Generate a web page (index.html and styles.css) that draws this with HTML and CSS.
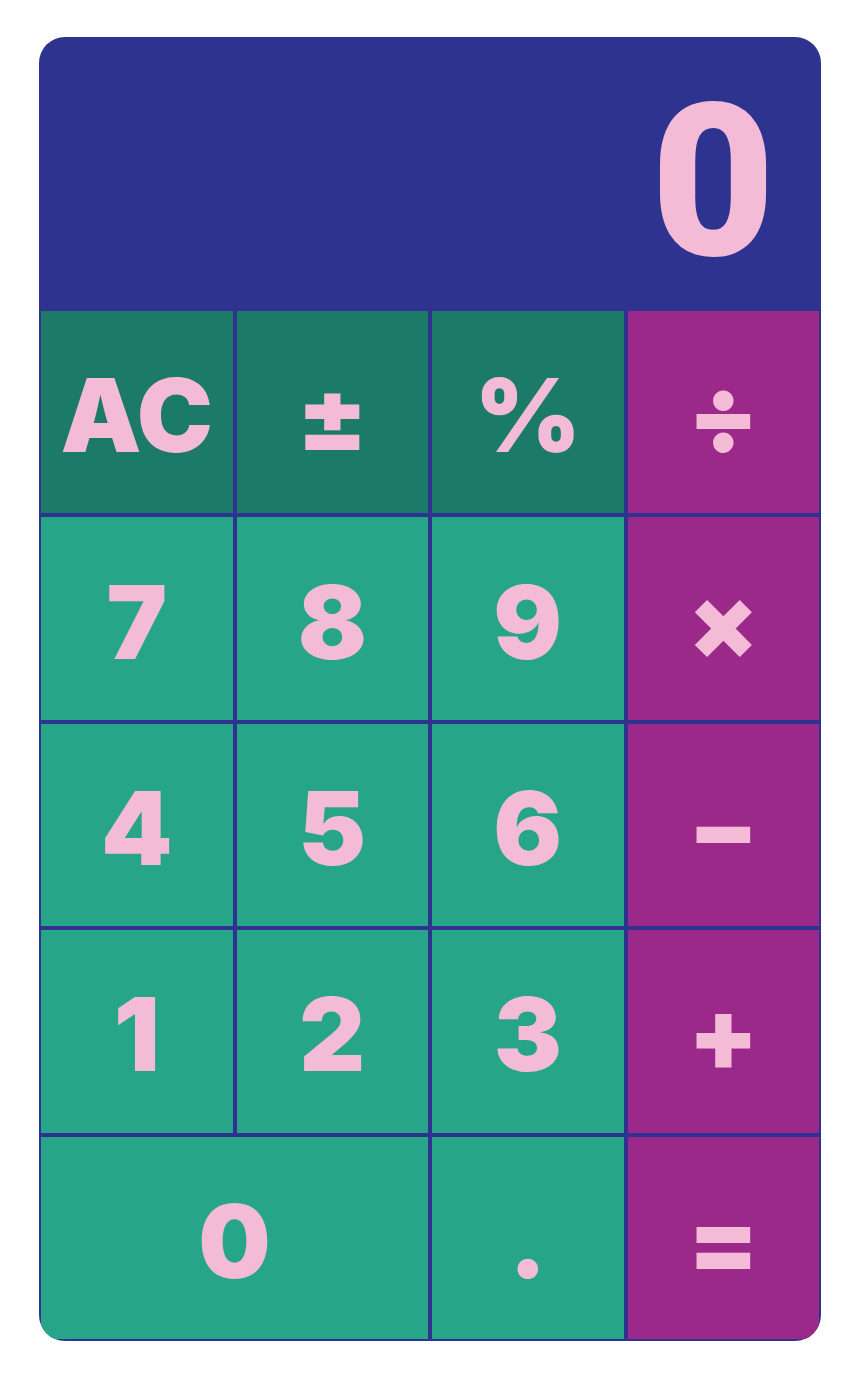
FILE: index.html
```html
<!DOCTYPE html>
<html lang="en">
<head>
<meta charset="utf-8">
<title>Calculator</title>
<link rel="stylesheet" href="styles.css">
</head>
<body>
<div class="calc">
  <div class="display"><span class="value">0</span></div>
  <div class="keys">
    <button class="key fn">AC</button>
    <button class="key fn">±</button>
    <button class="key fn">%</button>
    <button class="key op">÷</button>
    <button class="key num">7</button>
    <button class="key num">8</button>
    <button class="key num">9</button>
    <button class="key op">×</button>
    <button class="key num">4</button>
    <button class="key num">5</button>
    <button class="key num">6</button>
    <button class="key op">−</button>
    <button class="key num">1</button>
    <button class="key num">2</button>
    <button class="key num">3</button>
    <button class="key op">+</button>
    <button class="key num zero">0</button>
    <button class="key num">.</button>
    <button class="key op">=</button>
  </div>
</div>
</body>
</html>
```
FILE: styles.css
```css
html, body {
  margin: 0;
  padding: 0;
  background: #ffffff;
}
body {
  font-family: Inter, "Noto Sans", sans-serif;
}
.calc {
  box-sizing: border-box;
  width: 782px;
  margin: 37px 0 0 39px;
  background: #2e3390;
  border-radius: 26px;
  overflow: hidden;
  padding: 0 2px 2px 2px;
  display: flex;
  flex-direction: column;
  gap: 4px;
}
.display {
  height: 270px;
  box-sizing: border-box;
  display: flex;
  justify-content: flex-end;
  align-items: flex-start;
  padding: 38px 44px 0 0;
}
.value {
  color: #f3bbd6;
  font-family: Roboto, Inter, sans-serif;
  font-size: 214px;
  font-weight: 900;
  line-height: 1;
}
.keys {
  display: grid;
  grid-template-columns: repeat(4, 1fr);
  grid-auto-rows: 202.4px;
  gap: 4px;
}
.key {
  border: none;
  margin: 0;
  padding: 6px 0 0 0;
  font-family: Inter, "Noto Sans", sans-serif;
  font-size: 102px;
  font-weight: 900;
  line-height: 1;
  color: #f3bbd6;
  display: flex;
  align-items: center;
  justify-content: center;
}
.fn { background: #1b7b68; }
.num { background: #26a589; }
.op { background: #9b2989; }
.zero { grid-column: span 2; }
```
